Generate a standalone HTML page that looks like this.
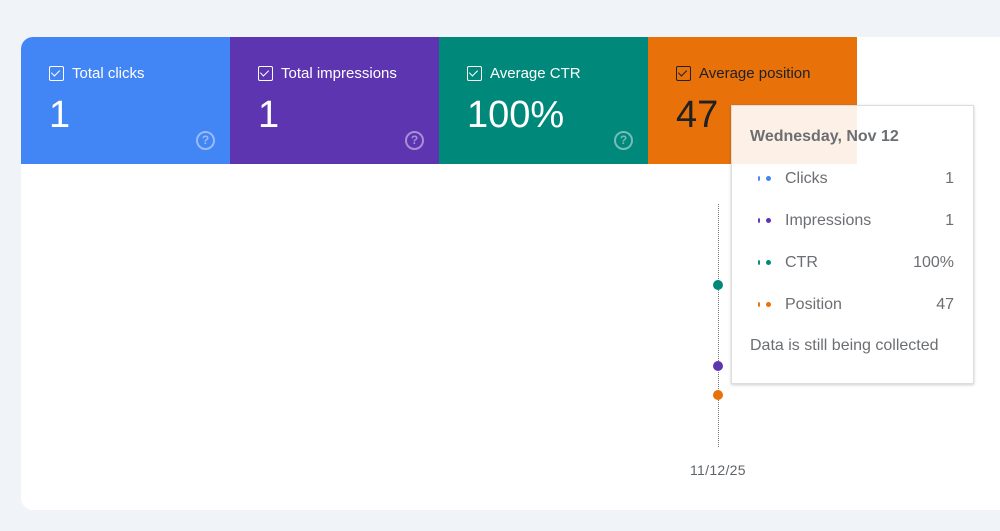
<!DOCTYPE html>
<html><head><style>
body{margin:0;width:1000px;height:531px;background:#f0f3f8;font-family:"Liberation Sans",sans-serif;position:relative;overflow:hidden}
.card{position:absolute;left:21px;top:37px;width:990px;height:473px;background:#fff;border-radius:12px;overflow:hidden}
.t{position:absolute;top:0;width:209px;height:127px;color:#fff}
.t .lb{position:absolute;left:28px;top:28px;font-size:15px;display:flex;align-items:center}
.cb{width:13px;height:13px;border:1.5px solid currentColor;border-radius:2px;margin-right:8px;position:relative}
.cb:after{content:"";position:absolute;left:3px;top:1px;width:4px;height:7px;border:solid currentColor;border-width:0 1.5px 1.5px 0;transform:rotate(45deg)}
.t .v{position:absolute;left:28px;top:57px;font-size:38px}
.q{position:absolute;left:175px;top:94px;width:15px;height:15px;border:2px solid rgba(255,255,255,.45);border-radius:50%;font-size:12px;font-weight:bold;line-height:15px;text-align:center;color:rgba(255,255,255,.45)}
.tip{position:absolute;left:731px;top:105px;width:241px;height:277px;background:rgba(255,255,255,.9);border:1px solid #ddd;box-shadow:0 1px 3px rgba(0,0,0,.2);color:#6b6e72;font-size:16px}
.row{position:absolute;left:0;width:222px;display:flex;align-items:center}
.row .d{width:26px;margin-left:26px;font-size:0;position:relative;height:6px}
.row .d i{position:absolute;width:5px;height:5px;border-radius:50%;top:0}
.row .n{flex:1;margin-left:1px}
.dot{position:absolute;left:713px;width:10px;height:10px;border-radius:50%}
</style></head><body>
<div class="card">
<div class="t" style="left:0;background:#4285f4"><div class="lb"><span class="cb"></span>Total clicks</div><div class="v">1</div><div class="q">?</div></div>
<div class="t" style="left:209px;background:#5e35b1"><div class="lb"><span class="cb"></span>Total impressions</div><div class="v">1</div><div class="q">?</div></div>
<div class="t" style="left:418px;background:#00897b"><div class="lb"><span class="cb"></span>Average CTR</div><div class="v">100%</div><div class="q">?</div></div>
<div class="t" style="left:627px;background:#e8710a;color:#202124"><div class="lb"><span class="cb"></span>Average position</div><div class="v">47</div></div>
<div style="position:absolute;left:697px;top:167px;height:243px;border-left:1px dotted #777"></div>
<div style="position:absolute;left:669px;top:425px;font-size:14px;color:#5f6368;letter-spacing:.3px">11/12/25</div>
</div>
<div class="dot" style="top:280px;background:#00897b"></div>
<div class="dot" style="top:361px;background:#5e35b1"></div>
<div class="dot" style="top:390px;background:#e8710a"></div>
<div class="tip">
<div style="position:absolute;left:18px;top:22px;font-weight:bold;font-size:16px">Wednesday, Nov 12</div>
<div class="row" style="top:64px"><span class="d"><i style="left:0;width:2px;background:#4285f4"></i><i style="left:8px;background:#4285f4"></i></span><span class="n">Clicks</span><span>1</span></div>
<div class="row" style="top:106px"><span class="d"><i style="left:0;width:2px;background:#5e35b1"></i><i style="left:8px;background:#5e35b1"></i></span><span class="n">Impressions</span><span>1</span></div>
<div class="row" style="top:148px"><span class="d"><i style="left:0;width:2px;background:#00897b"></i><i style="left:8px;background:#00897b"></i></span><span class="n">CTR</span><span>100%</span></div>
<div class="row" style="top:190px"><span class="d"><i style="left:0;width:2px;background:#e8710a"></i><i style="left:8px;background:#e8710a"></i></span><span class="n">Position</span><span>47</span></div>
<div style="position:absolute;left:18px;top:231px">Data is still being collected</div>
</div>
</body></html>
